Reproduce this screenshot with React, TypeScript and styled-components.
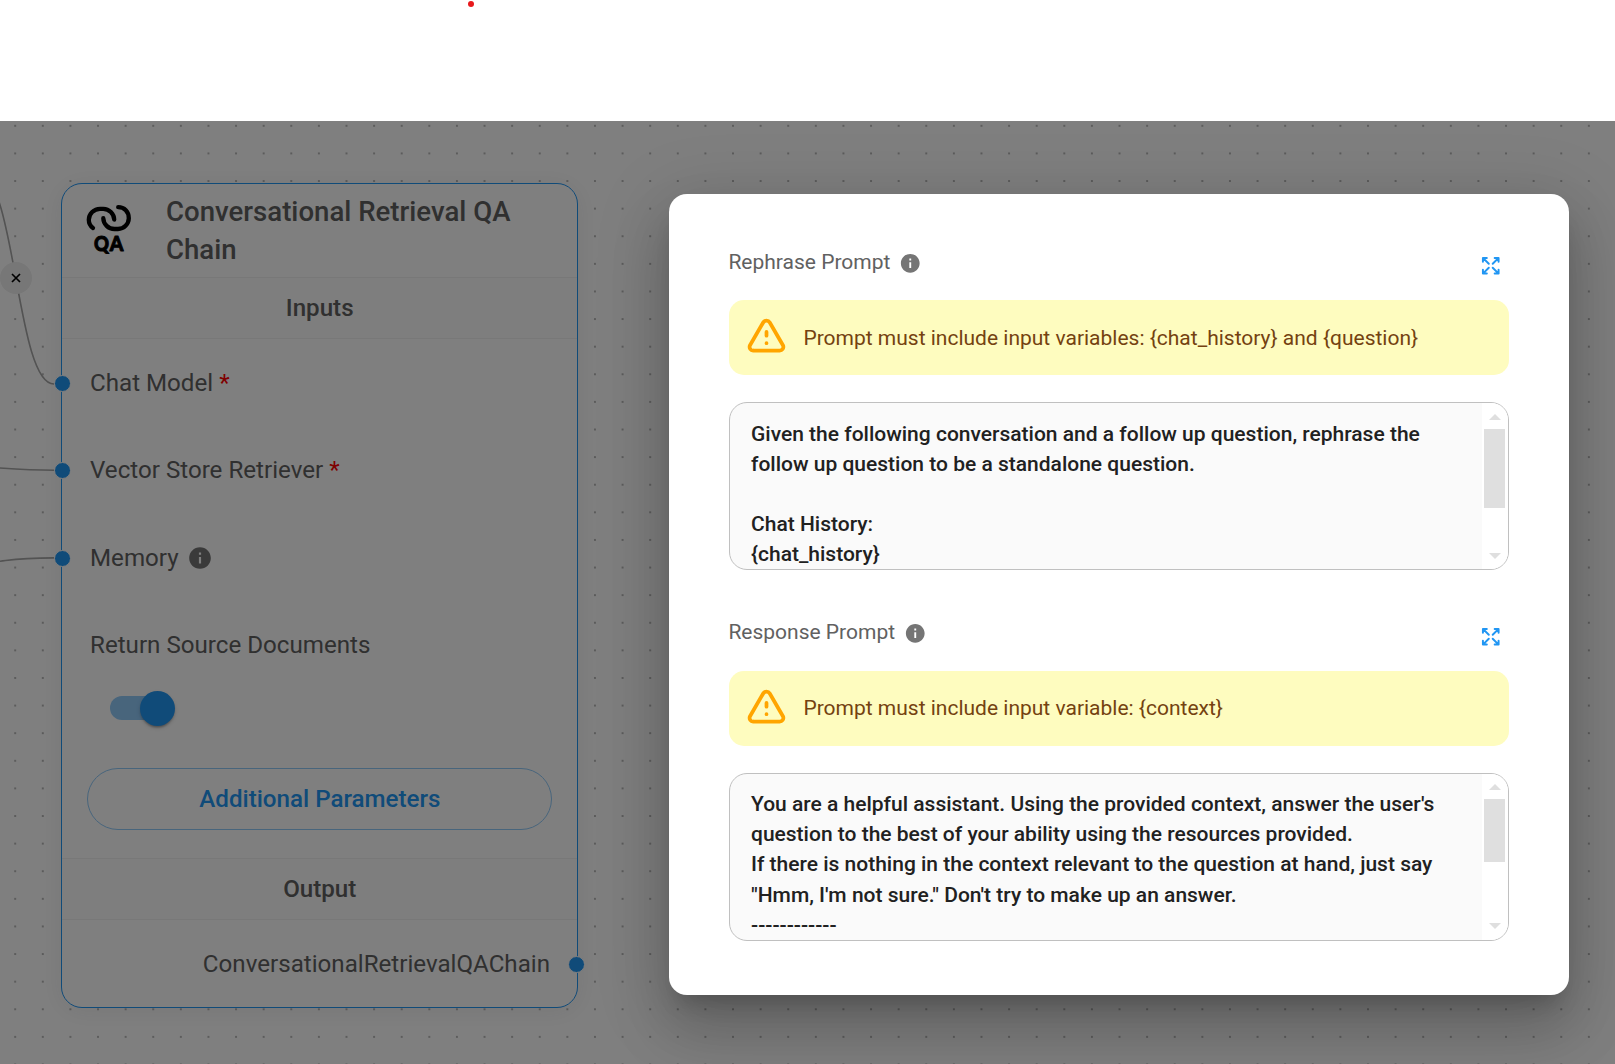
import React from 'react';
import styled, { createGlobalStyle } from 'styled-components';

const GlobalStyle = createGlobalStyle`
  * { box-sizing: border-box; }
  html, body { margin: 0; padding: 0; background: #fff; overflow: hidden; }
  body { font-family: Roboto, "Liberation Sans", sans-serif; }
`;

const Page = styled.div`
  display: flex;
  flex-direction: column;
  width: 1615px;
  height: 1064px;
  overflow: hidden;
`;

const TopBar = styled.header`
  flex: 0 0 121px;
  padding: 1px 0 0 468px;
`;

const RecordDot = styled.span`
  display: block;
  width: 6px;
  height: 6px;
  border-radius: 50%;
  background: #e8191c;
`;

const Canvas = styled.main`
  flex: 1;
  position: relative;
  overflow: hidden;
  background: #fff;
`;

const CanvasArt = styled.svg`
  position: absolute;
  left: 0;
  top: 0;
`;

const EdgeButton = styled.button`
  position: absolute;
  left: 0;
  top: 141px;
  width: 32px;
  height: 32px;
  padding: 0;
  border: 0;
  border-radius: 50%;
  background: #eee;
  display: grid;
  place-items: center;
`;

const Node = styled.section`
  position: absolute;
  left: 61px;
  top: 62px;
  width: 517.4px;
  height: 825.4px;
  display: flex;
  flex-direction: column;
  border: 1px solid #2196f3;
  border-radius: 21px;
  background: #fff;
  color: #616161;
  box-shadow: 0 3px 24px rgba(32, 40, 45, 0.08);
`;

const NodeHeader = styled.div`
  flex: 0 0 93px;
  display: flex;
  align-items: center;
  padding-left: 20px;
`;

const Logo = styled.svg`
  flex: 0 0 54px;
`;

const NodeTitle = styled.h2`
  margin: 0 0 0 30px;
  width: 370px;
  font-size: 27.6px;
  line-height: 38px;
  font-weight: 500;
`;

const Band = styled.div`
  flex: 0 0 62px;
  display: grid;
  place-items: center;
  border: solid #f0f0f0;
  border-width: 1px 0;
  background: #fcfcfc;
  font-size: 24.15px;
  font-weight: 500;
`;

const Inputs = styled.div`
  flex: 0 0 519px;
  display: flex;
  flex-direction: column;
`;

const Row = styled.div<{ $output?: boolean }>`
  position: relative;
  flex: 0 0 87.45px;
  display: flex;
  align-items: center;
  justify-content: ${(p) => (p.$output ? 'flex-end' : 'flex-start')};
  padding: 0 27.4px 0 28px;
  font-size: 24.15px;
  line-height: 34px;
  white-space: pre;
`;

const RowLabel = styled.span`
  margin-right: 8.8px;
`;

const Required = styled.span`
  color: #f00;
`;

const Handle = styled.span<{ $side: 'left' | 'right' }>`
  position: absolute;
  top: 36px;
  ${(p) => p.$side}: -8px;
  width: 17px;
  height: 17px;
  border: 1px solid #fff;
  border-radius: 50%;
  background: #2196f3;
`;

const SwitchTrack = styled.div`
  flex: none;
  display: flex;
  align-items: center;
  width: 59px;
  height: 24px;
  margin: 7.4px 0 0 48px;
  border-radius: 12px;
  background: #90caf9;
`;

const SwitchThumb = styled.span`
  flex: none;
  width: 35px;
  height: 35px;
  margin-left: 30px;
  border-radius: 50%;
  background: #2196f3;
  box-shadow: 0 3px 2px -2px rgba(0, 0, 0, 0.2), 0 2px 2px rgba(0, 0, 0, 0.14), 0 2px 5px rgba(0, 0, 0, 0.12);
`;

const ParametersButton = styled.button`
  flex: 0 0 62px;
  width: 465px;
  margin: 47.8px 0 0 25.4px;
  padding: 0;
  border: 1px solid #90caf9;
  border-radius: 31px;
  background: transparent;
  color: #2196f3;
  font: 500 24.15px Roboto, sans-serif;
`;

const Backdrop = styled.div`
  position: absolute;
  inset: 0;
  display: flex;
  align-items: flex-start;
  justify-content: flex-end;
  padding: 73px 46px 0 0;
  background: rgba(0, 0, 0, 0.5);
`;

const Dialog = styled.div`
  width: 900px;
  height: 801px;
  display: flex;
  flex-direction: column;
  gap: 32.55px;
  padding: 38px 60px 0;
  border-radius: 18px;
  background: #fff;
  box-shadow: 0 16.5px 22.5px -10.5px rgba(0, 0, 0, 0.2), 0 36px 57px 4.5px rgba(0, 0, 0, 0.14),
    0 13.5px 69px 12px rgba(0, 0, 0, 0.12);
`;

const Prompt = styled.div`
  height: 338px;
  flex: none;
  display: flex;
  flex-direction: column;
`;

const LabelRow = styled.div`
  flex: 0 0 68px;
  display: flex;
  align-items: flex-start;
  justify-content: space-between;
  padding: 14.85px 7px 0 0;
`;

const Label = styled.div`
  display: flex;
  align-items: center;
  gap: 8.6px;
  margin-left: -0.6px;
  font-size: 21px;
  line-height: 31px;
  color: #616161;
`;

const ExpandIcon = styled.svg`
  margin-top: 7.3px;
`;

const Warning = styled.div`
  flex: 0 0 75px;
  display: flex;
  align-items: center;
  gap: 14.4px;
  width: 780px;
  padding: 0 15px;
  border-radius: 15px;
  background: #fefcbf;
  color: #744210;
  font-size: 21px;
  line-height: 25px;
`;

const WarningText = styled.div`
  padding-top: 1.7px;
`;

const TextBox = styled.div`
  flex: 0 0 168px;
  display: flex;
  justify-content: space-between;
  margin-top: 27px;
  border: 1px solid #c0c0c0;
  border-radius: 18px;
  background: #fafafa;
  overflow: hidden;
`;

const TextContent = styled.div`
  padding: 15.5px 0 0 21px;
  height: 166px;
  overflow: hidden;
  white-space: pre;
  font-size: 21px;
  font-weight: 500;
  line-height: 30.19px;
  color: #212121;
`;

const ScrollBar = styled.div`
  flex: 0 0 26px;
  display: flex;
  flex-direction: column;
  align-items: center;
  padding: 10.85px 1px 10.15px 0;
  background: #fff;
`;

const Arrow = styled.i<{ $down?: boolean }>`
  border: solid transparent;
  border-width: ${(p) => (p.$down ? '6px 6px 0' : '0 6px 6px')};
  border-${(p) => (p.$down ? 'top' : 'bottom')}-color: #dfdfdf;
`;

const Thumb = styled.div<{ $size: number }>`
  width: 21px;
  height: ${(p) => p.$size}px;
  margin: 9px 0 auto;
  background: #dfdfdf;
`;

const InfoGlyph = styled.svg`
  position: relative;
  top: 0.8px;
`;

const InfoIcon = ({ size }: { size: number }) => (
  <InfoGlyph width={size} height={size} viewBox="0 0 24 24" fill="#757575">
    <path d="M12 2C6.48 2 2 6.48 2 12s4.48 10 10 10 10-4.48 10-10S17.52 2 12 2zm1 15h-2v-6h2v6zm0-8h-2V7h2v2z" />
  </InfoGlyph>
);

const WarningIcon = () => (
  <svg width="45" height="45" viewBox="0 0 24 24" fill="none" stroke="orange" strokeWidth="2" strokeLinecap="round" strokeLinejoin="round">
    <path d="M12 9v2m0 4v.01" />
    <path d="M5 19h14a2 2 0 0 0 1.84 -2.75l-7.1 -12.25a2 2 0 0 0 -3.5 0l-7.1 12.25a2 2 0 0 0 1.75 2.75" />
  </svg>
);

interface PromptFieldProps {
  label: string;
  warning: string;
  text: string;
  thumb: number;
}

const PromptField = ({ label, warning, text, thumb }: PromptFieldProps) => (
  <Prompt>
    <LabelRow>
      <Label>
        {label}
        <InfoIcon size={22.5} />
      </Label>
      <ExpandIcon width="23.5" height="23.5" viewBox="0 0 24 24" fill="none" stroke="#2196f3" strokeWidth="2" strokeLinecap="round" strokeLinejoin="round">
        <path d="M16 4h4v4M14 10l6-6M8 20H4v-4M4 20l6-6M16 20h4v-4M14 14l6 6M8 4H4v4M4 4l6 6" />
      </ExpandIcon>
    </LabelRow>
    <Warning>
      <WarningIcon />
      <WarningText>{warning}</WarningText>
    </Warning>
    <TextBox>
      <TextContent>{text}</TextContent>
      <ScrollBar>
        <Arrow />
        <Thumb $size={thumb} />
        <Arrow $down />
      </ScrollBar>
    </TextBox>
  </Prompt>
);

const REPHRASE = `Given the following conversation and a follow up question, rephrase the
follow up question to be a standalone question.

Chat History:
{chat_history}`;

const RESPONSE = `You are a helpful assistant. Using the provided context, answer the user's
question to the best of your ability using the resources provided.
If there is nothing in the context relevant to the question at hand, just say
"Hmm, I'm not sure." Don't try to make up an answer.
------------`;

export default function App() {
  return (
    <Page>
      <GlobalStyle />
      <TopBar>
        <RecordDot />
      </TopBar>
      <Canvas>
        <CanvasArt width="1615" height="943">
          <defs>
            <pattern id="dots" x="1.4" y="-9" width="27.608" height="27.608" patternUnits="userSpaceOnUse">
              <circle cx="13.8" cy="13.8" r="0.9" fill="#999" />
            </pattern>
          </defs>
          <rect width="1615" height="943" fill="url(#dots)" />
          <g fill="none" stroke="#a6a6a6" strokeWidth="1.6">
            <path d="M-22 53C16 53 16 263 54 263" />
            <path d="M-40 344C0 347 20 349.3 54 349.3" />
            <path d="M-40 451C-10 439 20 436.9 54 436.9" />
          </g>
        </CanvasArt>
        <EdgeButton>
          <svg width="10" height="10" viewBox="0 0 10 10" stroke="#000" strokeWidth="1.7">
            <path d="M1 1l8 8M9 1l-8 8" />
          </svg>
        </EdgeButton>
        <Node>
          <NodeHeader>
            <Logo width="54" height="54" viewBox="82 203.8 54 54">
              <g fill="none" stroke="#000" strokeWidth="4.3" strokeLinecap="round">
                <path d="M93 227.8C90 225.6 88.8 222.5 88.8 219.5A11.2 11.2 0 0 1 100 208.6H103.3A11.2 11.2 0 0 1 114.2 219.3" />
                <path d="M103.3 218A11.2 11 0 0 0 114.5 228.8H118A11 11 0 0 0 128.8 218C128.8 211.5 124.4 207 118.2 207" />
              </g>
              <g fontFamily="Lato, sans-serif" fontWeight="900" fontSize="21" stroke="#000" strokeWidth="1" strokeLinejoin="round">
                <text x="94" y="251.2" textLength="15" lengthAdjust="spacingAndGlyphs">Q</text>
                <text x="109.7" y="251.2" textLength="13.6" lengthAdjust="spacingAndGlyphs">A</text>
              </g>
            </Logo>
            <NodeTitle>Conversational Retrieval QA Chain</NodeTitle>
          </NodeHeader>
          <Band>Inputs</Band>
          <Inputs>
            <Row>
              <Handle $side="left" />
              Chat Model <Required>*</Required>
            </Row>
            <Row>
              <Handle $side="left" />
              Vector Store Retriever <Required>*</Required>
            </Row>
            <Row>
              <Handle $side="left" />
              <RowLabel>Memory</RowLabel>
              <InfoIcon size={26} />
            </Row>
            <Row>Return Source Documents</Row>
            <SwitchTrack>
              <SwitchThumb />
            </SwitchTrack>
            <ParametersButton>Additional Parameters</ParametersButton>
          </Inputs>
          <Band>Output</Band>
          <Row $output>
            ConversationalRetrievalQAChain
            <Handle $side="right" />
          </Row>
        </Node>
        <Backdrop>
          <Dialog>
            <PromptField
              label="Rephrase Prompt"
              warning="Prompt must include input variables: {chat_history} and {question}"
              text={REPHRASE}
              thumb={79}
            />
            <PromptField
              label="Response Prompt"
              warning="Prompt must include input variable: {context}"
              text={RESPONSE}
              thumb={63}
            />
          </Dialog>
        </Backdrop>
      </Canvas>
    </Page>
  );
}
